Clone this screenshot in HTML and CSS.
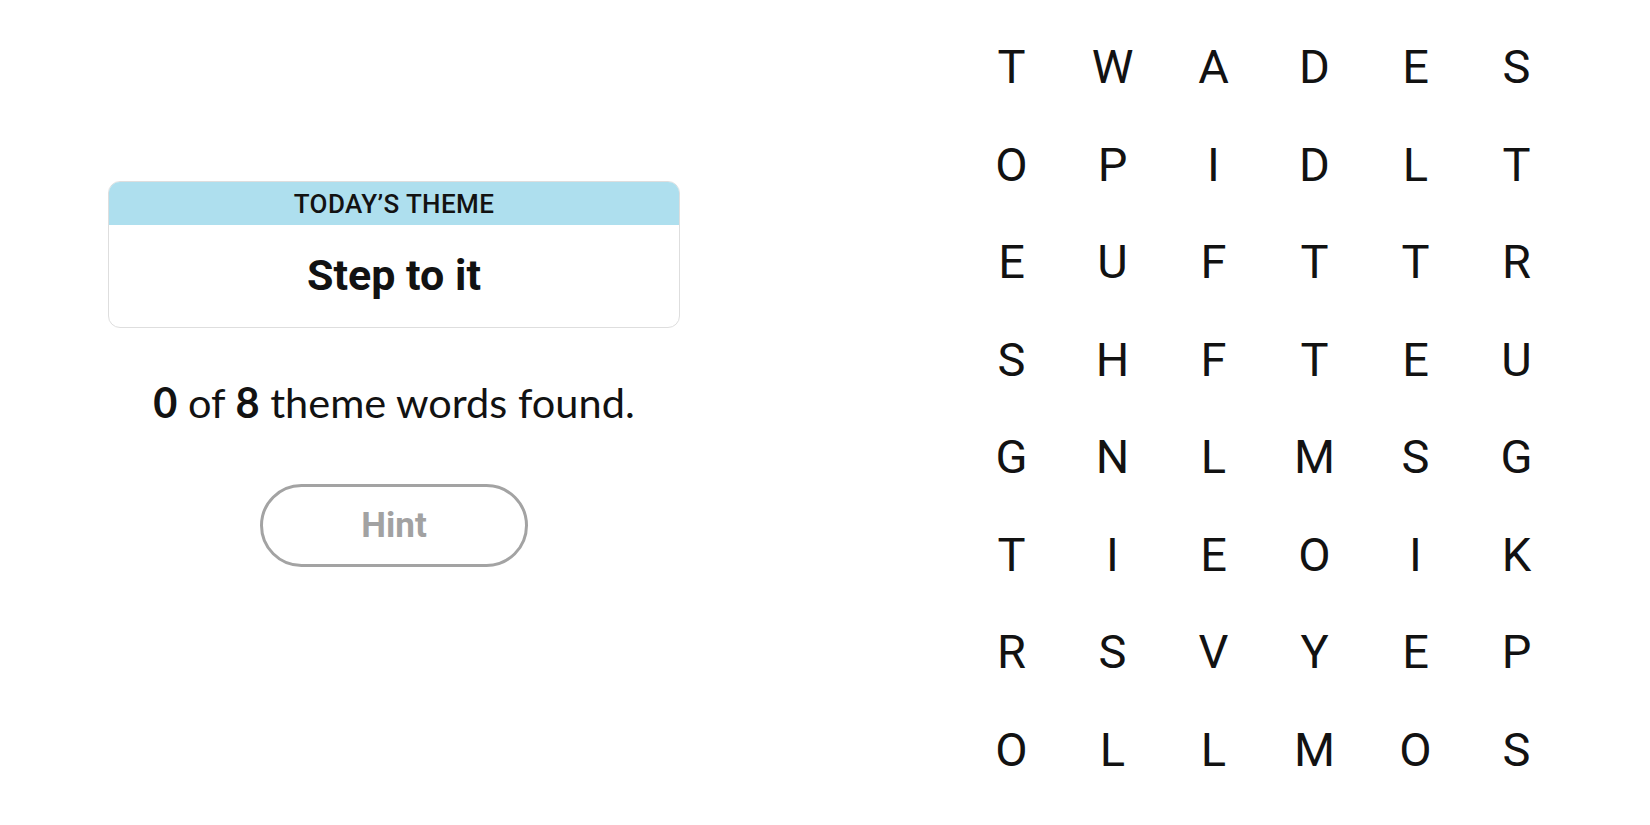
FILE: index.html
```html
<!DOCTYPE html>
<html lang="en">
<head>
<meta charset="utf-8">
<title>Strands</title>
<link rel="stylesheet" href="styles.css">
</head>
<body>
<main class="game">
  <section class="panel">
    <div class="theme-card">
      <div class="theme-head">TODAY’S THEME</div>
      <div class="theme-body">Step to it</div>
    </div>
    <p class="status"><b>0</b> of <b>8</b> theme words found.</p>
    <button class="hint" type="button">Hint</button>
  </section>
  <section class="board">
    <span>T</span><span>W</span><span>A</span><span>D</span><span>E</span><span>S</span>
    <span>O</span><span>P</span><span>I</span><span>D</span><span>L</span><span>T</span>
    <span>E</span><span>U</span><span>F</span><span>T</span><span>T</span><span>R</span>
    <span>S</span><span>H</span><span>F</span><span>T</span><span>E</span><span>U</span>
    <span>G</span><span>N</span><span>L</span><span>M</span><span>S</span><span>G</span>
    <span>T</span><span>I</span><span>E</span><span>O</span><span>I</span><span>K</span>
    <span>R</span><span>S</span><span>V</span><span>Y</span><span>E</span><span>P</span>
    <span>O</span><span>L</span><span>L</span><span>M</span><span>O</span><span>S</span>
  </section>
</main>
</body>
</html>
```

FILE: styles.css
```css
html, body {
  margin: 0;
  padding: 0;
  background: #ffffff;
  color: #121212;
}

.game {
  display: flex;
  width: 1650px;
  height: 825px;
  overflow: hidden;
}

.panel {
  width: 788px;
  display: flex;
  flex-direction: column;
  align-items: center;
  padding-top: 181px;
  box-sizing: border-box;
}

.theme-card {
  width: 572px;
  height: 147px;
  box-sizing: border-box;
  border: 1px solid #dedede;
  border-radius: 12px;
  overflow: hidden;
  display: flex;
  flex-direction: column;
}

.theme-head {
  height: 43px;
  background: #aedfee;
  display: flex;
  align-items: center;
  justify-content: center;
  font-family: Roboto, "Liberation Sans", sans-serif;
  font-weight: 500;
  font-size: 26px;
  letter-spacing: 0.4px;
  color: #121212;
  padding-top: 1px;
  box-sizing: border-box;
}

.theme-body {
  flex: 1;
  display: flex;
  align-items: center;
  justify-content: center;
  padding-bottom: 3px;
  font-family: Roboto, "Liberation Sans", sans-serif;
  font-weight: 700;
  font-size: 43px;
  color: #121212;
}

.status {
  margin: 49px 0 0;
  font-family: Lato, "Liberation Sans", sans-serif;
  font-size: 41.5px;
  line-height: 50px;
  color: #121212;
}

.status b {
  font-weight: 700;
}

.hint {
  margin-top: 57px;
  width: 268px;
  height: 83px;
  border: 3px solid #a3a3a3;
  border-radius: 42px;
  background: #ffffff;
  font-family: Roboto, "Liberation Sans", sans-serif;
  font-weight: 700;
  font-size: 35px;
  color: #a2a2a2;
  padding: 0;
}

.board {
  margin-left: 173px;
  margin-top: 18px;
  display: grid;
  grid-template-columns: repeat(6, 101px);
  grid-auto-rows: 97.5px;
  align-self: flex-start;
}

.board span {
  display: flex;
  align-items: center;
  justify-content: center;
  font-family: Roboto, "Liberation Sans", sans-serif;
  font-size: 47px;
  color: #121212;
}
```
